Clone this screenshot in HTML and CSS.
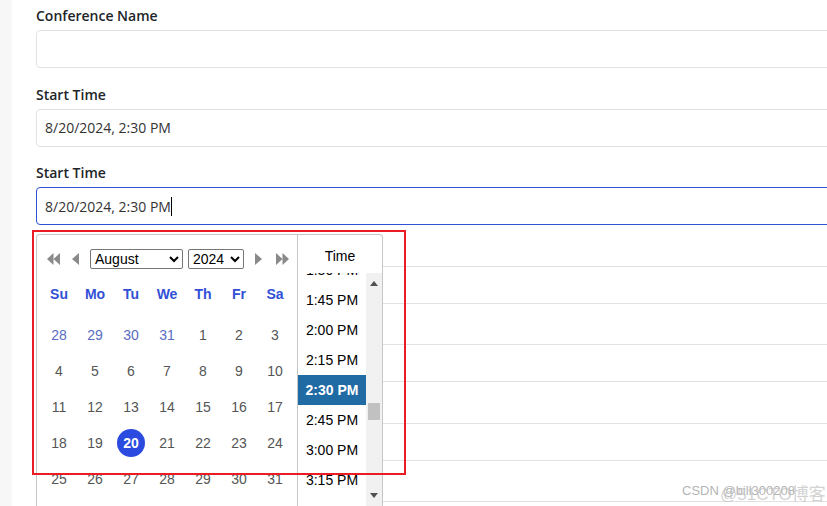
FILE: index.html
```html
<!DOCTYPE html>
<html lang="en">
<head>
<meta charset="utf-8">
<title>Conference form</title>
<link rel="stylesheet" href="styles.css">
</head>
<body>
<div class="page">
  <aside class="strip"></aside>
  <main class="form">
    <div class="group">
      <label class="label">Conference Name</label>
      <div class="field"></div>
    </div>
    <div class="group">
      <label class="label">Start Time</label>
      <div class="field">8/20/2024, 2:30 PM</div>
    </div>
    <div class="group">
      <label class="label">Start Time</label>
      <div class="field focused">8/20/2024, 2:30 PM<span class="caret"></span></div>
    </div>
    <div class="group">
      <div class="label"></div>
      <div class="field"></div>
    </div>
    <div class="group">
      <div class="label"></div>
      <div class="field"></div>
    </div>
    <div class="group">
      <div class="label"></div>
      <div class="field"></div>
    </div>
    <div class="group">
      <div class="label"></div>
      <div class="field"></div>
    </div>
  </main>
</div>

<div class="picker">
  <div class="month">
    <div class="nav">
      <svg class="ico dbl" width="13" height="12" viewBox="0 0 13 12"><path d="M6.5 0 L0 6 L6.5 12 Z M13 0 L6.5 6 L13 12 Z" fill="#8a8a8a"/></svg>
      <svg class="ico single l" width="8" height="12" viewBox="0 0 8 12"><path d="M8 0 L1 6 L8 12 Z" fill="#8a8a8a"/></svg>
      <div class="sel sel-month">August<svg class="chev" width="10" height="7" viewBox="0 0 10 7"><path d="M1 1 L5 5 L9 1" fill="none" stroke="#000" stroke-width="2"/></svg></div>
      <div class="sel sel-year">2024<svg class="chev" width="10" height="7" viewBox="0 0 10 7"><path d="M1 1 L5 5 L9 1" fill="none" stroke="#000" stroke-width="2"/></svg></div>
      <svg class="ico single r" width="8" height="12" viewBox="0 0 8 12"><path d="M0 0 L7 6 L0 12 Z" fill="#8a8a8a"/></svg>
      <svg class="ico dbl r2" width="13" height="12" viewBox="0 0 13 12"><path d="M0 0 L6.5 6 L0 12 Z M6.5 0 L13 6 L6.5 12 Z" fill="#8a8a8a"/></svg>
    </div>
    <div class="dnames">
      <span>Su</span><span>Mo</span><span>Tu</span><span>We</span><span>Th</span><span>Fr</span><span>Sa</span>
    </div>
    <div class="days">
      <span class="out">28</span><span class="out">29</span><span class="out">30</span><span class="out">31</span><span>1</span><span>2</span><span>3</span>
      <span>4</span><span>5</span><span>6</span><span>7</span><span>8</span><span>9</span><span>10</span>
      <span>11</span><span>12</span><span>13</span><span>14</span><span>15</span><span>16</span><span>17</span>
      <span>18</span><span>19</span><span class="sel-day"><b>20</b></span><span>21</span><span>22</span><span>23</span><span>24</span>
      <span>25</span><span>26</span><span>27</span><span>28</span><span>29</span><span>30</span><span>31</span>
    </div>
  </div>
  <div class="time">
    <div class="time-head">Time</div>
    <div class="time-body">
      <ul class="tlist">
        <li>1:30 PM</li>
        <li>1:45 PM</li>
        <li>2:00 PM</li>
        <li>2:15 PM</li>
        <li class="active">2:30 PM</li>
        <li>2:45 PM</li>
        <li>3:00 PM</li>
        <li>3:15 PM</li>
      </ul>
      <div class="sbar">
        <svg class="sarrow up" width="8" height="5" viewBox="0 0 8 5"><path d="M0 5 L4 0 L8 5 Z" fill="#505050"/></svg>
        <div class="thumb"></div>
        <svg class="sarrow down" width="8" height="5" viewBox="0 0 8 5"><path d="M0 0 L4 5 L8 0 Z" fill="#505050"/></svg>
      </div>
    </div>
  </div>
</div>

<div class="annot"></div>

<div class="watermark"><span class="wm1">CSDN @bill300208</span><span class="wm2">@51CTO博客</span></div>
</body>
</html>
```

FILE: styles.css
```css
* { box-sizing: border-box; }
html, body {
  margin: 0;
  padding: 0;
  width: 827px;
  height: 506px;
  overflow: hidden;
  background: #fff;
}
.page {
  display: flex;
  height: 506px;
  overflow: hidden;
}
.strip {
  width: 12px;
  flex: 0 0 12px;
  background: #f7f7f7;
}
.form {
  flex: 1;
  min-width: 0;
  padding: 6px 0 0 24px;
  font-family: "Open Sans", "Noto Sans", sans-serif;
  overflow: hidden;
}
.group {
  margin-bottom: 16.5px;
}
.label {
  display: block;
  font-size: 14px;
  font-weight: 600;
  line-height: 20px;
  height: 20px;
  color: #212529;
  margin-bottom: 4px;
}
.field {
  width: 840px;
  height: 38px;
  border: 1px solid #e2e2e2;
  border-radius: 4px;
  padding: 0 8px;
  display: flex;
  align-items: center;
  font-size: 14px;
  color: #333;
  background: #fff;
}
.field.focused {
  border-color: #2f50d3;
}
.caret {
  display: inline-block;
  width: 1px;
  height: 19px;
  background: #000;
}

/* date picker popup */
.picker {
  position: absolute;
  left: 36px;
  top: 234px;
  height: 272px;
  display: flex;
  background: #fff;
  border: 1px solid #c6c6c6;
  border-bottom: none;
  border-radius: 4px 4px 0 0;
  font-family: "Liberation Sans", Arial, sans-serif;
  font-size: 14px;
  overflow: hidden;
}
.month {
  width: 260px;
}
.nav {
  display: flex;
  align-items: center;
  height: 20px;
  margin-top: 14px;
  padding-left: 10px;
}
.ico { display: block; }
.single.l { margin-left: 11px; }
.sel {
  height: 20px;
  border: 1px solid #767676;
  border-radius: 2px;
  display: flex;
  align-items: center;
  justify-content: space-between;
  padding: 0 3px 0 4px;
  font-size: 14px;
  color: #000;
  background: #fff;
}
.sel-month { width: 93px; margin-left: 11px; }
.sel-year { width: 56px; margin-left: 5px; }
.chev { display: block; }
.single.r { margin-left: 11px; }
.r2 { margin-left: 13px; }

.dnames, .days {
  display: grid;
  grid-template-columns: repeat(7, 36px);
  padding-left: 4px;
}
.dnames {
  margin-top: 7px;
}
.dnames span {
  height: 36px;
  display: flex;
  align-items: center;
  justify-content: center;
  font-weight: bold;
  color: #3150d6;
}
.days {
  margin-top: 5px;
}
.days span {
  height: 36px;
  display: flex;
  align-items: center;
  justify-content: center;
  color: #555;
}
.days span.out {
  color: #5a6cc2;
}
.days span.sel-day b {
  width: 28px;
  height: 28px;
  border-radius: 50%;
  background: #2b4be0;
  color: #fff;
  font-weight: bold;
  display: flex;
  align-items: center;
  justify-content: center;
}

.time {
  width: 85px;
  border-left: 1px solid #c6c6c6;
  display: flex;
  flex-direction: column;
}
.time-head {
  height: 38px;
  flex: 0 0 38px;
  display: flex;
  align-items: center;
  justify-content: center;
  color: #000;
  padding-top: 4px;
}
.time-body {
  flex: 1;
  display: flex;
  overflow: hidden;
}
.tlist {
  list-style: none;
  margin: -18px 0 0 0;
  padding: 0;
  width: 68px;
}
.tlist li {
  height: 30px;
  display: flex;
  align-items: center;
  justify-content: center;
  color: #000;
}
.tlist li.active {
  background: #216ba5;
  color: #fff;
  font-weight: bold;
}
.sbar {
  width: 16px;
  background: #f1f1f1;
  position: relative;
}
.sarrow { position: absolute; left: 4px; }
.sarrow.up { top: 8px; }
.sarrow.down { top: 220px; }
.thumb {
  position: absolute;
  left: 2px;
  top: 130px;
  width: 12px;
  height: 17px;
  background: #c1c1c1;
}

/* red annotation */
.annot {
  position: absolute;
  left: 32px;
  top: 230px;
  width: 374px;
  height: 245px;
  border: 2px solid #ec1c24;
}

.watermark {
  position: absolute;
  left: 682px;
  top: 480px;
  width: 140px;
  height: 22px;
  font-family: "Liberation Sans", "Noto Sans CJK SC", sans-serif;
}
.wm1 {
  position: absolute;
  left: 0;
  top: 3px;
  font-size: 13px;
  color: #b5b5b5;
  white-space: nowrap;
}
.wm2 {
  position: absolute;
  left: 38px;
  top: 0;
  font-size: 17px;
  color: rgba(190,190,190,0.7);
  white-space: nowrap;
}
```
